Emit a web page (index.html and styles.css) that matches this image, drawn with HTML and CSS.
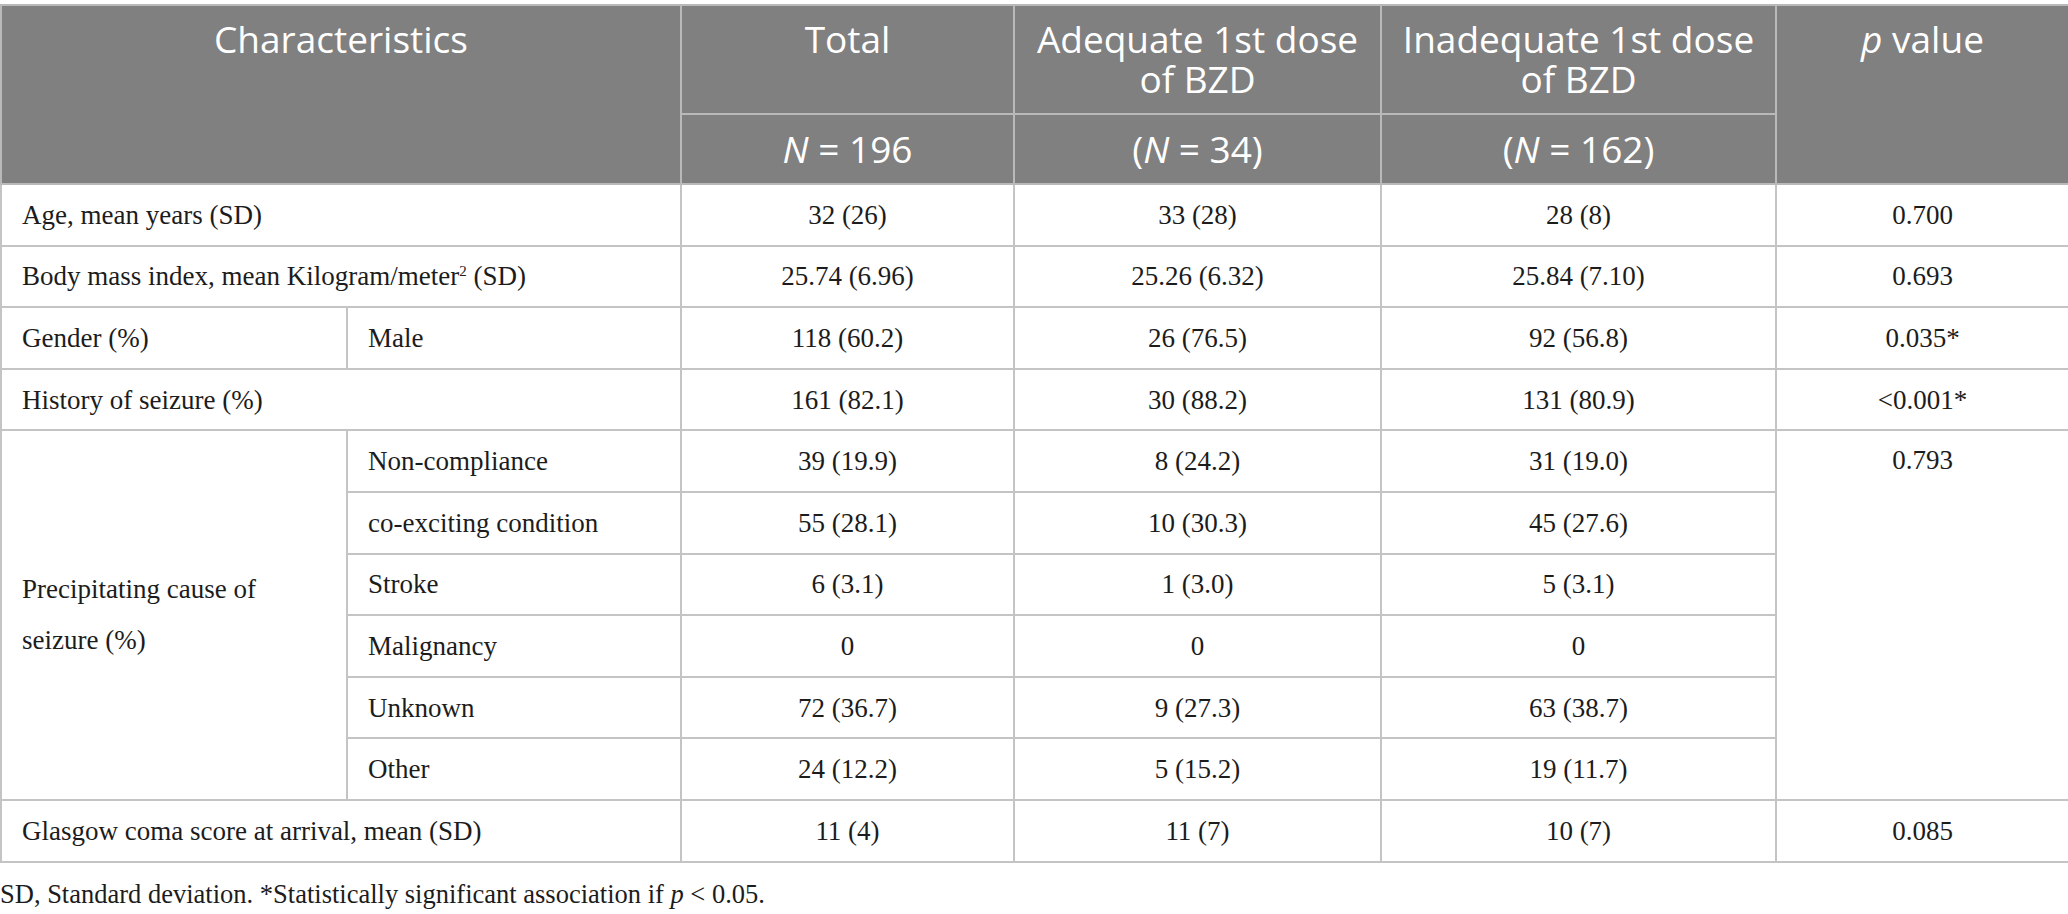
FILE: index.html
```html
<!DOCTYPE html>
<html lang="en">
<head>
<meta charset="utf-8">
<title>Table</title>
<link rel="stylesheet" href="styles.css">
</head>
<body>
<div class="page">
  <table class="data">
    <colgroup>
      <col class="c-a"><col class="c-b"><col class="c-total"><col class="c-adq"><col class="c-inadq"><col class="c-p">
    </colgroup>
    <thead>
      <tr class="h1">
        <th colspan="2" rowspan="2">Characteristics</th>
        <th>Total</th>
        <th>Adequate 1st dose<br>of BZD</th>
        <th>Inadequate 1st dose<br>of BZD</th>
        <th rowspan="2"><i>p</i> value</th>
      </tr>
      <tr class="h2">
        <th><i>N</i> = 196</th>
        <th>(<i>N</i> = 34)</th>
        <th>(<i>N</i> = 162)</th>
      </tr>
    </thead>
    <tbody>
      <tr>
        <td colspan="2" class="lab">Age, mean years (SD)</td>
        <td>32 (26)</td><td>33 (28)</td><td>28 (8)</td><td>0.700</td>
      </tr>
      <tr>
        <td colspan="2" class="lab">Body mass index, mean Kilogram/meter<sup>2</sup> (SD)</td>
        <td>25.74 (6.96)</td><td>25.26 (6.32)</td><td>25.84 (7.10)</td><td>0.693</td>
      </tr>
      <tr>
        <td class="lab">Gender (%)</td><td class="lab">Male</td>
        <td>118 (60.2)</td><td>26 (76.5)</td><td>92 (56.8)</td><td>0.035*</td>
      </tr>
      <tr>
        <td colspan="2" class="lab">History of seizure (%)</td>
        <td>161 (82.1)</td><td>30 (88.2)</td><td>131 (80.9)</td><td>&lt;0.001*</td>
      </tr>
      <tr>
        <td rowspan="6" class="lab multi">Precipitating cause of seizure (%)</td>
        <td class="lab">Non-compliance</td>
        <td>39 (19.9)</td><td>8 (24.2)</td><td>31 (19.0)</td>
        <td rowspan="6" class="top">0.793</td>
      </tr>
      <tr>
        <td class="lab">co-exciting condition</td>
        <td>55 (28.1)</td><td>10 (30.3)</td><td>45 (27.6)</td>
      </tr>
      <tr>
        <td class="lab">Stroke</td>
        <td>6 (3.1)</td><td>1 (3.0)</td><td>5 (3.1)</td>
      </tr>
      <tr>
        <td class="lab">Malignancy</td>
        <td>0</td><td>0</td><td>0</td>
      </tr>
      <tr>
        <td class="lab">Unknown</td>
        <td>72 (36.7)</td><td>9 (27.3)</td><td>63 (38.7)</td>
      </tr>
      <tr>
        <td class="lab">Other</td>
        <td>24 (12.2)</td><td>5 (15.2)</td><td>19 (11.7)</td>
      </tr>
      <tr>
        <td colspan="2" class="lab">Glasgow coma score at arrival, mean (SD)</td>
        <td>11 (4)</td><td>11 (7)</td><td>10 (7)</td><td>0.085</td>
      </tr>
    </tbody>
  </table>
  <p class="note">SD, Standard deviation. *Statistically significant association if <i>p</i> &lt; 0.05.</p>
</div>
</body>
</html>
```

FILE: styles.css
```css
html, body {
  margin: 0;
  padding: 0;
  background: #ffffff;
}

.page {
  width: 2068px;
  padding-top: 4px;
}

.data {
  width: 2068px;
  border-collapse: collapse;
  table-layout: fixed;
  font-family: "Liberation Serif", "Times New Roman", serif;
  font-size: 27px;
  color: #1c1c1c;
}

.c-a { width: 346px; }
.c-b { width: 334px; }
.c-total { width: 333px; }
.c-adq { width: 367px; }
.c-inadq { width: 395px; }
.c-p { width: 293px; }

.data th,
.data td {
  border: 2px solid #c4c4c4;
  padding: 0;
}

.data th {
  background: #7f807f;
  color: #ffffff;
  font-family: "Open Sans", "Noto Sans", sans-serif;
  font-weight: 400;
  font-size: 37px;
  line-height: 40px;
  text-align: center;
  border-color: #b9b9b9;
}

.data .h1 th {
  height: 109px;
  vertical-align: top;
  padding-top: 13px;
  box-sizing: border-box;
}

.data .h2 th {
  height: 68px;
  vertical-align: middle;
}

.data td {
  height: 59.6px;
  text-align: center;
  vertical-align: middle;
  line-height: 32px;
}

.data td.lab {
  text-align: left;
  padding-left: 20px;
}

.data td.multi {
  line-height: 51px;
  padding-right: 20px;
}

.data td.top {
  vertical-align: top;
  line-height: 58px;
}

.data sup {
  font-size: 15px;
  line-height: 0;
  vertical-align: 9px;
}

.note {
  margin: 16px 0 0 0;
  font-family: "Liberation Serif", "Times New Roman", serif;
  font-size: 26.5px;
  line-height: 31px;
  color: #1c1c1c;
}
```
